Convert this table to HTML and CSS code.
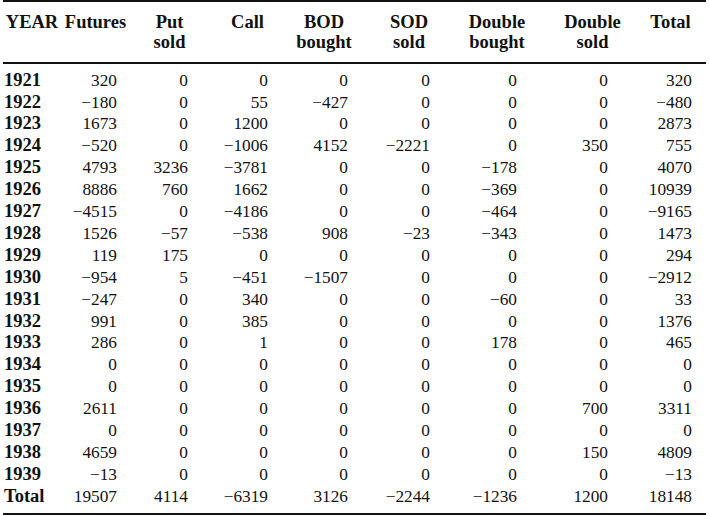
FILE: index.html
```html
<!DOCTYPE html>
<html lang="en">
<head>
<meta charset="utf-8">
<title>Yearly results</title>
<link rel="stylesheet" href="styles.css">
</head>
<body>
<table class="results">
  <colgroup>
    <col class="w0"><col class="w1"><col class="w2"><col class="w3"><col class="w4"><col class="w5"><col class="w6"><col class="w7"><col class="w8">
  </colgroup>
  <thead>
    <tr>
      <th>YEAR</th><th>Futures</th><th>Put<br>sold</th><th>Call</th><th>BOD<br>bought</th><th>SOD<br>sold</th><th>Double<br>bought</th><th>Double<br>sold</th><th>Total</th>
    </tr>
  </thead>
  <tbody>
    <tr class="first"><td>1921</td><td>320</td><td>0</td><td>0</td><td>0</td><td>0</td><td>0</td><td>0</td><td>320</td></tr>
    <tr><td>1922</td><td>&minus;180</td><td>0</td><td>55</td><td>&minus;427</td><td>0</td><td>0</td><td>0</td><td>&minus;480</td></tr>
    <tr><td>1923</td><td>1673</td><td>0</td><td>1200</td><td>0</td><td>0</td><td>0</td><td>0</td><td>2873</td></tr>
    <tr><td>1924</td><td>&minus;520</td><td>0</td><td>&minus;1006</td><td>4152</td><td>&minus;2221</td><td>0</td><td>350</td><td>755</td></tr>
    <tr><td>1925</td><td>4793</td><td>3236</td><td>&minus;3781</td><td>0</td><td>0</td><td>&minus;178</td><td>0</td><td>4070</td></tr>
    <tr><td>1926</td><td>8886</td><td>760</td><td>1662</td><td>0</td><td>0</td><td>&minus;369</td><td>0</td><td>10939</td></tr>
    <tr><td>1927</td><td>&minus;4515</td><td>0</td><td>&minus;4186</td><td>0</td><td>0</td><td>&minus;464</td><td>0</td><td>&minus;9165</td></tr>
    <tr><td>1928</td><td>1526</td><td>&minus;57</td><td>&minus;538</td><td>908</td><td>&minus;23</td><td>&minus;343</td><td>0</td><td>1473</td></tr>
    <tr><td>1929</td><td>119</td><td>175</td><td>0</td><td>0</td><td>0</td><td>0</td><td>0</td><td>294</td></tr>
    <tr><td>1930</td><td>&minus;954</td><td>5</td><td>&minus;451</td><td>&minus;1507</td><td>0</td><td>0</td><td>0</td><td>&minus;2912</td></tr>
    <tr><td>1931</td><td>&minus;247</td><td>0</td><td>340</td><td>0</td><td>0</td><td>&minus;60</td><td>0</td><td>33</td></tr>
    <tr><td>1932</td><td>991</td><td>0</td><td>385</td><td>0</td><td>0</td><td>0</td><td>0</td><td>1376</td></tr>
    <tr><td>1933</td><td>286</td><td>0</td><td>1</td><td>0</td><td>0</td><td>178</td><td>0</td><td>465</td></tr>
    <tr><td>1934</td><td>0</td><td>0</td><td>0</td><td>0</td><td>0</td><td>0</td><td>0</td><td>0</td></tr>
    <tr><td>1935</td><td>0</td><td>0</td><td>0</td><td>0</td><td>0</td><td>0</td><td>0</td><td>0</td></tr>
    <tr><td>1936</td><td>2611</td><td>0</td><td>0</td><td>0</td><td>0</td><td>0</td><td>700</td><td>3311</td></tr>
    <tr><td>1937</td><td>0</td><td>0</td><td>0</td><td>0</td><td>0</td><td>0</td><td>0</td><td>0</td></tr>
    <tr><td>1938</td><td>4659</td><td>0</td><td>0</td><td>0</td><td>0</td><td>0</td><td>150</td><td>4809</td></tr>
    <tr><td>1939</td><td>&minus;13</td><td>0</td><td>0</td><td>0</td><td>0</td><td>0</td><td>0</td><td>&minus;13</td></tr>
    <tr class="last"><td>Total</td><td>19507</td><td>4114</td><td>&minus;6319</td><td>3126</td><td>&minus;2244</td><td>&minus;1236</td><td>1200</td><td>18148</td></tr>
  </tbody>
</table>
</body>
</html>
```

FILE: styles.css
```css
html, body {
  margin: 0;
  padding: 0;
  background: #ffffff;
}

.results {
  margin-left: 3px;
  width: 703px;
  table-layout: fixed;
  border-collapse: separate;
  border-spacing: 0;
  font-family: "Liberation Serif", "Times New Roman", serif;
  color: #111111;
}

.w0 { width: 58px; }
.w1 { width: 69px; }
.w2 { width: 79px; }
.w3 { width: 77px; }
.w4 { width: 76px; }
.w5 { width: 94px; }
.w6 { width: 82px; }
.w7 { width: 109px; }
.w8 { width: 59px; }

.results th {
  font-size: 18.5px;
  font-weight: bold;
  line-height: 20px;
  text-align: center;
  vertical-align: top;
  padding: 10px 0 10px 0;
  border-top: 2px solid #111111;
  border-bottom: 2px solid #111111;
  white-space: nowrap;
}

.results th:last-child {
  padding-right: 12px;
}

.results td {
  font-size: 17.3px;
  line-height: 21.9px;
  text-align: right;
  padding: 0;
  white-space: nowrap;
}

.results td:first-child {
  font-size: 18.5px;
  font-weight: bold;
  text-align: left;
  padding-left: 1px;
}

.results td:nth-child(2) { padding-right: 13px; }
.results td:nth-child(3) { padding-right: 21px; }
.results td:nth-child(4) { padding-right: 18px; }
.results td:nth-child(5) { padding-right: 14px; }
.results td:nth-child(6) { padding-right: 26px; }
.results td:nth-child(7) { padding-right: 21px; }
.results td:nth-child(8) { padding-right: 39px; }
.results td:nth-child(9) { padding-right: 14px; }

.results .first td {
  padding-top: 5.6px;
}

.results .last td {
  padding-bottom: 5.5px;
  border-bottom: 2px solid #111111;
}
```
